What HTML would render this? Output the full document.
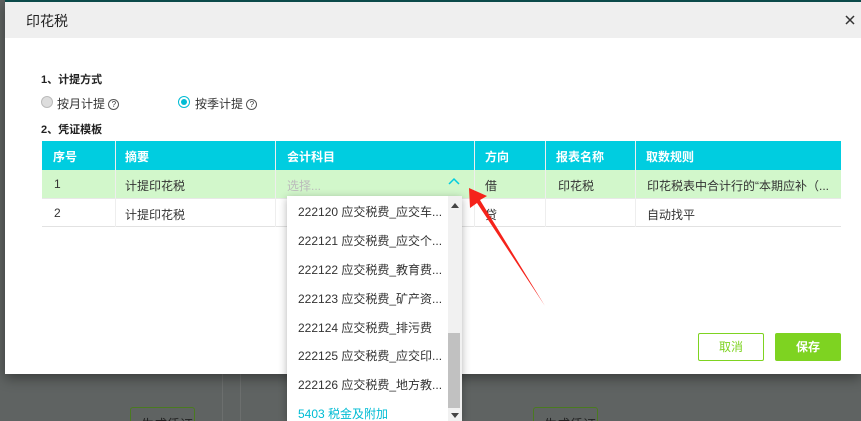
<!DOCTYPE html>
<html><head><meta charset="utf-8"><style>
*{margin:0;padding:0;box-sizing:border-box}
html,body{width:861px;height:421px;overflow:hidden}
body{background:#5f6362;font-family:"Liberation Sans","Noto Sans CJK SC",sans-serif;font-size:12px;color:#333;position:relative}
.abs{position:absolute}
.modal{left:5px;top:0;width:856px;height:374px;background:#fff;border-top:2px solid #0b4a4a;box-shadow:0 4px 12px rgba(0,0,0,.4)}
.hdr{left:0;top:0;width:856px;height:36px;background:#efefef}
.t{white-space:nowrap}
.cell{position:absolute;white-space:nowrap}
</style></head><body>
<div class="abs" style="left:130px;top:407px;width:65px;height:30px;border:1px solid #4a7a20;border-radius:3px;color:#222;font-size:13px;padding:6px 0 0 10px;overflow:hidden">生成凭证</div>
<div class="abs" style="left:533px;top:407px;width:65px;height:30px;border:1px solid #4a7a20;border-radius:3px;color:#222;font-size:13px;padding:6px 0 0 10px;overflow:hidden">生成凭证</div>
<div class="abs" style="left:222px;top:374px;width:1px;height:47px;background:#6c6f6e"></div>
<div class="abs" style="left:240px;top:374px;width:1px;height:47px;background:#6c6f6e"></div>
<div class="abs modal">
 <div class="abs hdr"></div>
 <div class="abs t" style="left:21px;top:9px;font-size:14px;color:#222">印花税</div>
 <svg class="abs" style="left:840px;top:13px" width="10" height="10"><path d="M1 1L9 9M9 1L1 9" stroke="#333" stroke-width="1.5"/></svg>
 <div class="abs t" style="left:36px;top:69px;font-weight:bold;font-size:11px;color:#222">1、计提方式</div>
 <div class="abs" style="left:36px;top:94px;width:12px;height:12px;border-radius:50%;background:#ddd;border:1px solid #bbb"></div>
 <div class="abs t" style="left:52px;top:93px;font-size:12px">按月计提 <span style="display:inline-block;width:11px;height:11px;border:1px solid #555;border-radius:50%;font-size:8px;text-align:center;line-height:9px;vertical-align:middle">?</span></div>
 <div class="abs" style="left:173px;top:94px;width:12px;height:12px;border-radius:50%;border:1px solid #00bcd4;background:#fff"><div style="margin:2px;width:6px;height:6px;border-radius:50%;background:#00bcd4"></div></div>
 <div class="abs t" style="left:190px;top:93px;font-size:12px">按季计提 <span style="display:inline-block;width:11px;height:11px;border:1px solid #555;border-radius:50%;font-size:8px;text-align:center;line-height:9px;vertical-align:middle">?</span></div>
 <div class="abs t" style="left:36px;top:119px;font-weight:bold;font-size:11px;color:#222">2、凭证模板</div>
</div>
<div class="abs" style="left:42px;top:141px;width:799px;height:29px;background:#00cde0"></div>
<div class="abs" style="left:42px;top:170px;width:799px;height:28px;background:#d2f7cb"></div>
<div class="abs" style="left:42px;top:226px;width:799px;height:1px;background:#e2e2e2"></div>
<div class="abs" style="left:42px;top:198px;width:799px;height:1px;background:#e8e8e8"></div>
<div class="abs" style="left:115px;top:141px;width:1px;height:86px;background:#eee"></div>
<div class="abs" style="left:275px;top:141px;width:1px;height:86px;background:#eee"></div>
<div class="abs" style="left:474px;top:141px;width:1px;height:86px;background:#eee"></div>
<div class="abs" style="left:545px;top:141px;width:1px;height:86px;background:#eee"></div>
<div class="abs" style="left:635px;top:141px;width:1px;height:86px;background:#eee"></div>
<div class="cell" style="left:53px;top:148px;color:#fff;font-weight:bold">序号</div>
<div class="cell" style="left:125px;top:148px;color:#fff;font-weight:bold">摘要</div>
<div class="cell" style="left:287px;top:148px;color:#fff;font-weight:bold">会计科目</div>
<div class="cell" style="left:485px;top:148px;color:#fff;font-weight:bold">方向</div>
<div class="cell" style="left:556px;top:148px;color:#fff;font-weight:bold">报表名称</div>
<div class="cell" style="left:646px;top:148px;color:#fff;font-weight:bold">取数规则</div>
<div class="cell" style="left:54px;top:177px">1</div>
<div class="cell" style="left:125px;top:177px">计提印花税</div>
<div class="cell" style="left:287px;top:177px;color:#bbb">选择...</div>
<svg class="abs" style="left:448px;top:177px" width="12" height="8"><path d="M1 7L6 2L11 7" stroke="#00cde0" stroke-width="1.5" fill="none"/></svg>
<div class="cell" style="left:485px;top:177px">借</div>
<div class="cell" style="left:558px;top:177px">印花税</div>
<div class="cell" style="left:647px;top:177px">印花税表中合计行的“本期应补（...</div>
<div class="cell" style="left:54px;top:206px">2</div>
<div class="cell" style="left:125px;top:206px">计提印花税</div>
<div class="cell" style="left:485px;top:206px">贷</div>
<div class="cell" style="left:647px;top:206px">自动找平</div>
<div class="abs" style="left:698px;top:333px;width:66px;height:28px;border:1px solid #7ed321;border-radius:2px;color:#7ed321;text-align:center;line-height:26px">取消</div>
<div class="abs" style="left:775px;top:333px;width:66px;height:28px;background:#7ed321;border-radius:2px;color:#fff;text-align:center;line-height:28px;font-weight:bold">保存</div>
<div class="abs" style="left:287px;top:196px;width:175px;height:225px;background:#fff;box-shadow:0 2px 8px rgba(0,0,0,.3)">
 <div class="abs" style="left:161px;top:0;width:14px;height:225px;background:#f1f1f1"></div>
 <div class="abs" style="left:161px;top:137px;width:12px;height:75px;background:#c1c1c1"></div>
 <div class="abs" style="left:164px;top:7px;width:0;height:0;border-left:4px solid transparent;border-right:4px solid transparent;border-bottom:5px solid #444"></div>
 <div class="abs" style="left:164px;top:217px;width:0;height:0;border-left:4px solid transparent;border-right:4px solid transparent;border-top:5px solid #444"></div>
 <div class="cell" style="left:11px;top:7px">222120 应交税费_应交车...</div>
 <div class="cell" style="left:11px;top:36px">222121 应交税费_应交个...</div>
 <div class="cell" style="left:11px;top:65px">222122 应交税费_教育费...</div>
 <div class="cell" style="left:11px;top:94px">222123 应交税费_矿产资...</div>
 <div class="cell" style="left:11px;top:123px">222124 应交税费_排污费</div>
 <div class="cell" style="left:11px;top:151px">222125 应交税费_应交印...</div>
 <div class="cell" style="left:11px;top:180px">222126 应交税费_地方教...</div>
 <div class="cell" style="left:11px;top:209px;color:#00bcd4">5403 税金及附加</div>
</div>
<svg class="abs" style="left:0;top:0" width="861" height="421"><polygon points="469,188 487,196 480,200 545,306 477,203 470,208" fill="#f5231b"/></svg>
</body></html>
